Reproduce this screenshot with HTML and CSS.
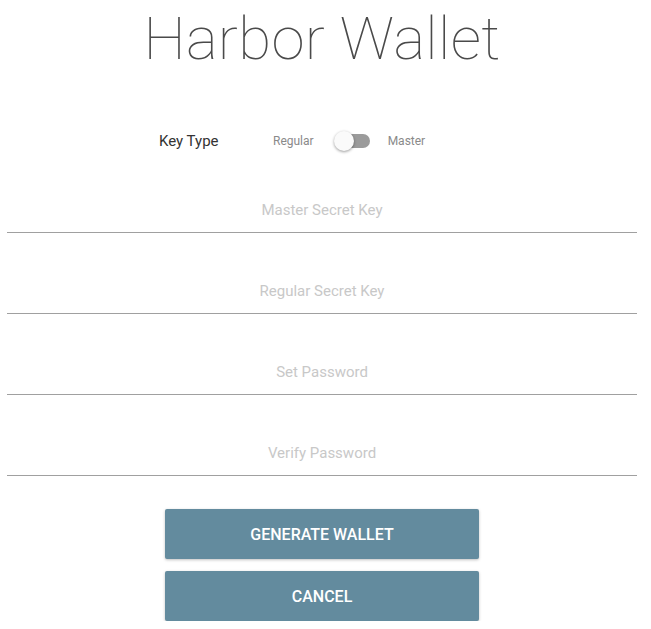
FILE: index.html
```html
<!DOCTYPE html>
<html lang="en">
<head>
    <meta charset="UTF-8">
    <meta name="viewport" content="width=device-width, initial-scale=1.0">
    <title>Harbor Wallet</title>
    <link rel="stylesheet" href="styles.css">
</head>
<body>

<div class="container">
    <h1>Harbor Wallet</h1>

    <div class="key-type">
        <span class="key-label">Key Type</span>
        <span class="switch-label">Regular</span>
        <span class="switch">
            <span class="track"></span>
            <span class="knob"></span>
        </span>
        <span class="switch-label">Master</span>
    </div>

    <div class="field">
        <input type="password" placeholder="Master Secret Key">
    </div>
    <div class="field">
        <input type="password" placeholder="Regular Secret Key">
    </div>
    <div class="field">
        <input type="password" placeholder="Set Password">
    </div>
    <div class="field">
        <input type="password" placeholder="Verify Password">
    </div>

    <div class="actions">
        <button>Generate Wallet</button>
        <button>Cancel</button>
    </div>
</div>

</body>
</html>
```

FILE: styles.css
```css
:root {
    --text-color: #444;
    --muted-color: #8a8a8a;
    --placeholder-color: #c8c8c8;
    --line-color: #a0a0a0;
    --button-bg-color: #638b9e;
}

body {
    font-family: Roboto, Arial, sans-serif;
    margin: 0;
    background: #fff;
    color: var(--text-color);
}

.container {
    padding: 0 14px 0 7px;
}

h1 {
    font-size: 60px;
    font-weight: 100;
    text-align: center;
    margin: 0;
    padding-top: 2px;
    line-height: 74px;
    color: #4a4a4a;
    letter-spacing: 0.3px;
}

.key-type {
    display: flex;
    align-items: center;
    margin-top: 54px;
    padding-left: 152px;
    height: 22px;
}

.key-label {
    font-size: 15px;
    color: #333;
    width: 114px;
}

.switch-label {
    font-size: 12px;
    color: var(--muted-color);
}

.switch {
    position: relative;
    width: 36px;
    height: 20px;
    margin: 0 18px 0 20px;
}

.track {
    position: absolute;
    left: 2px;
    top: 3px;
    width: 34px;
    height: 14px;
    border-radius: 7px;
    background: #9b9b9b;
}

.knob {
    position: absolute;
    left: 0;
    top: 0;
    width: 20px;
    height: 20px;
    border-radius: 50%;
    background: #fafafa;
    box-shadow: 0 1px 3px rgba(0, 0, 0, 0.4);
}

.field {
    height: 81px;
    display: flex;
    align-items: flex-end;
}

input {
    width: 100%;
    border: none;
    border-bottom: 1px solid var(--line-color);
    outline: none;
    text-align: center;
    font-family: Roboto, Arial, sans-serif;
    font-size: 15px;
    padding: 0 0 13px;
    height: 32px;
    box-sizing: border-box;
    color: var(--text-color);
    background: transparent;
}

input::placeholder {
    color: var(--placeholder-color);
}

.actions {
    display: flex;
    flex-direction: column;
    align-items: center;
    gap: 12px;
    margin-top: 33px;
}

button {
    width: 314px;
    height: 50px;
    border: none;
    border-radius: 2px;
    background-color: var(--button-bg-color);
    color: #fff;
    font-family: Roboto, Arial, sans-serif;
    font-size: 16px;
    font-weight: 500;
    text-transform: uppercase;
    box-shadow: 0 1px 3px rgba(0, 0, 0, 0.25);
    cursor: pointer;
}
```
